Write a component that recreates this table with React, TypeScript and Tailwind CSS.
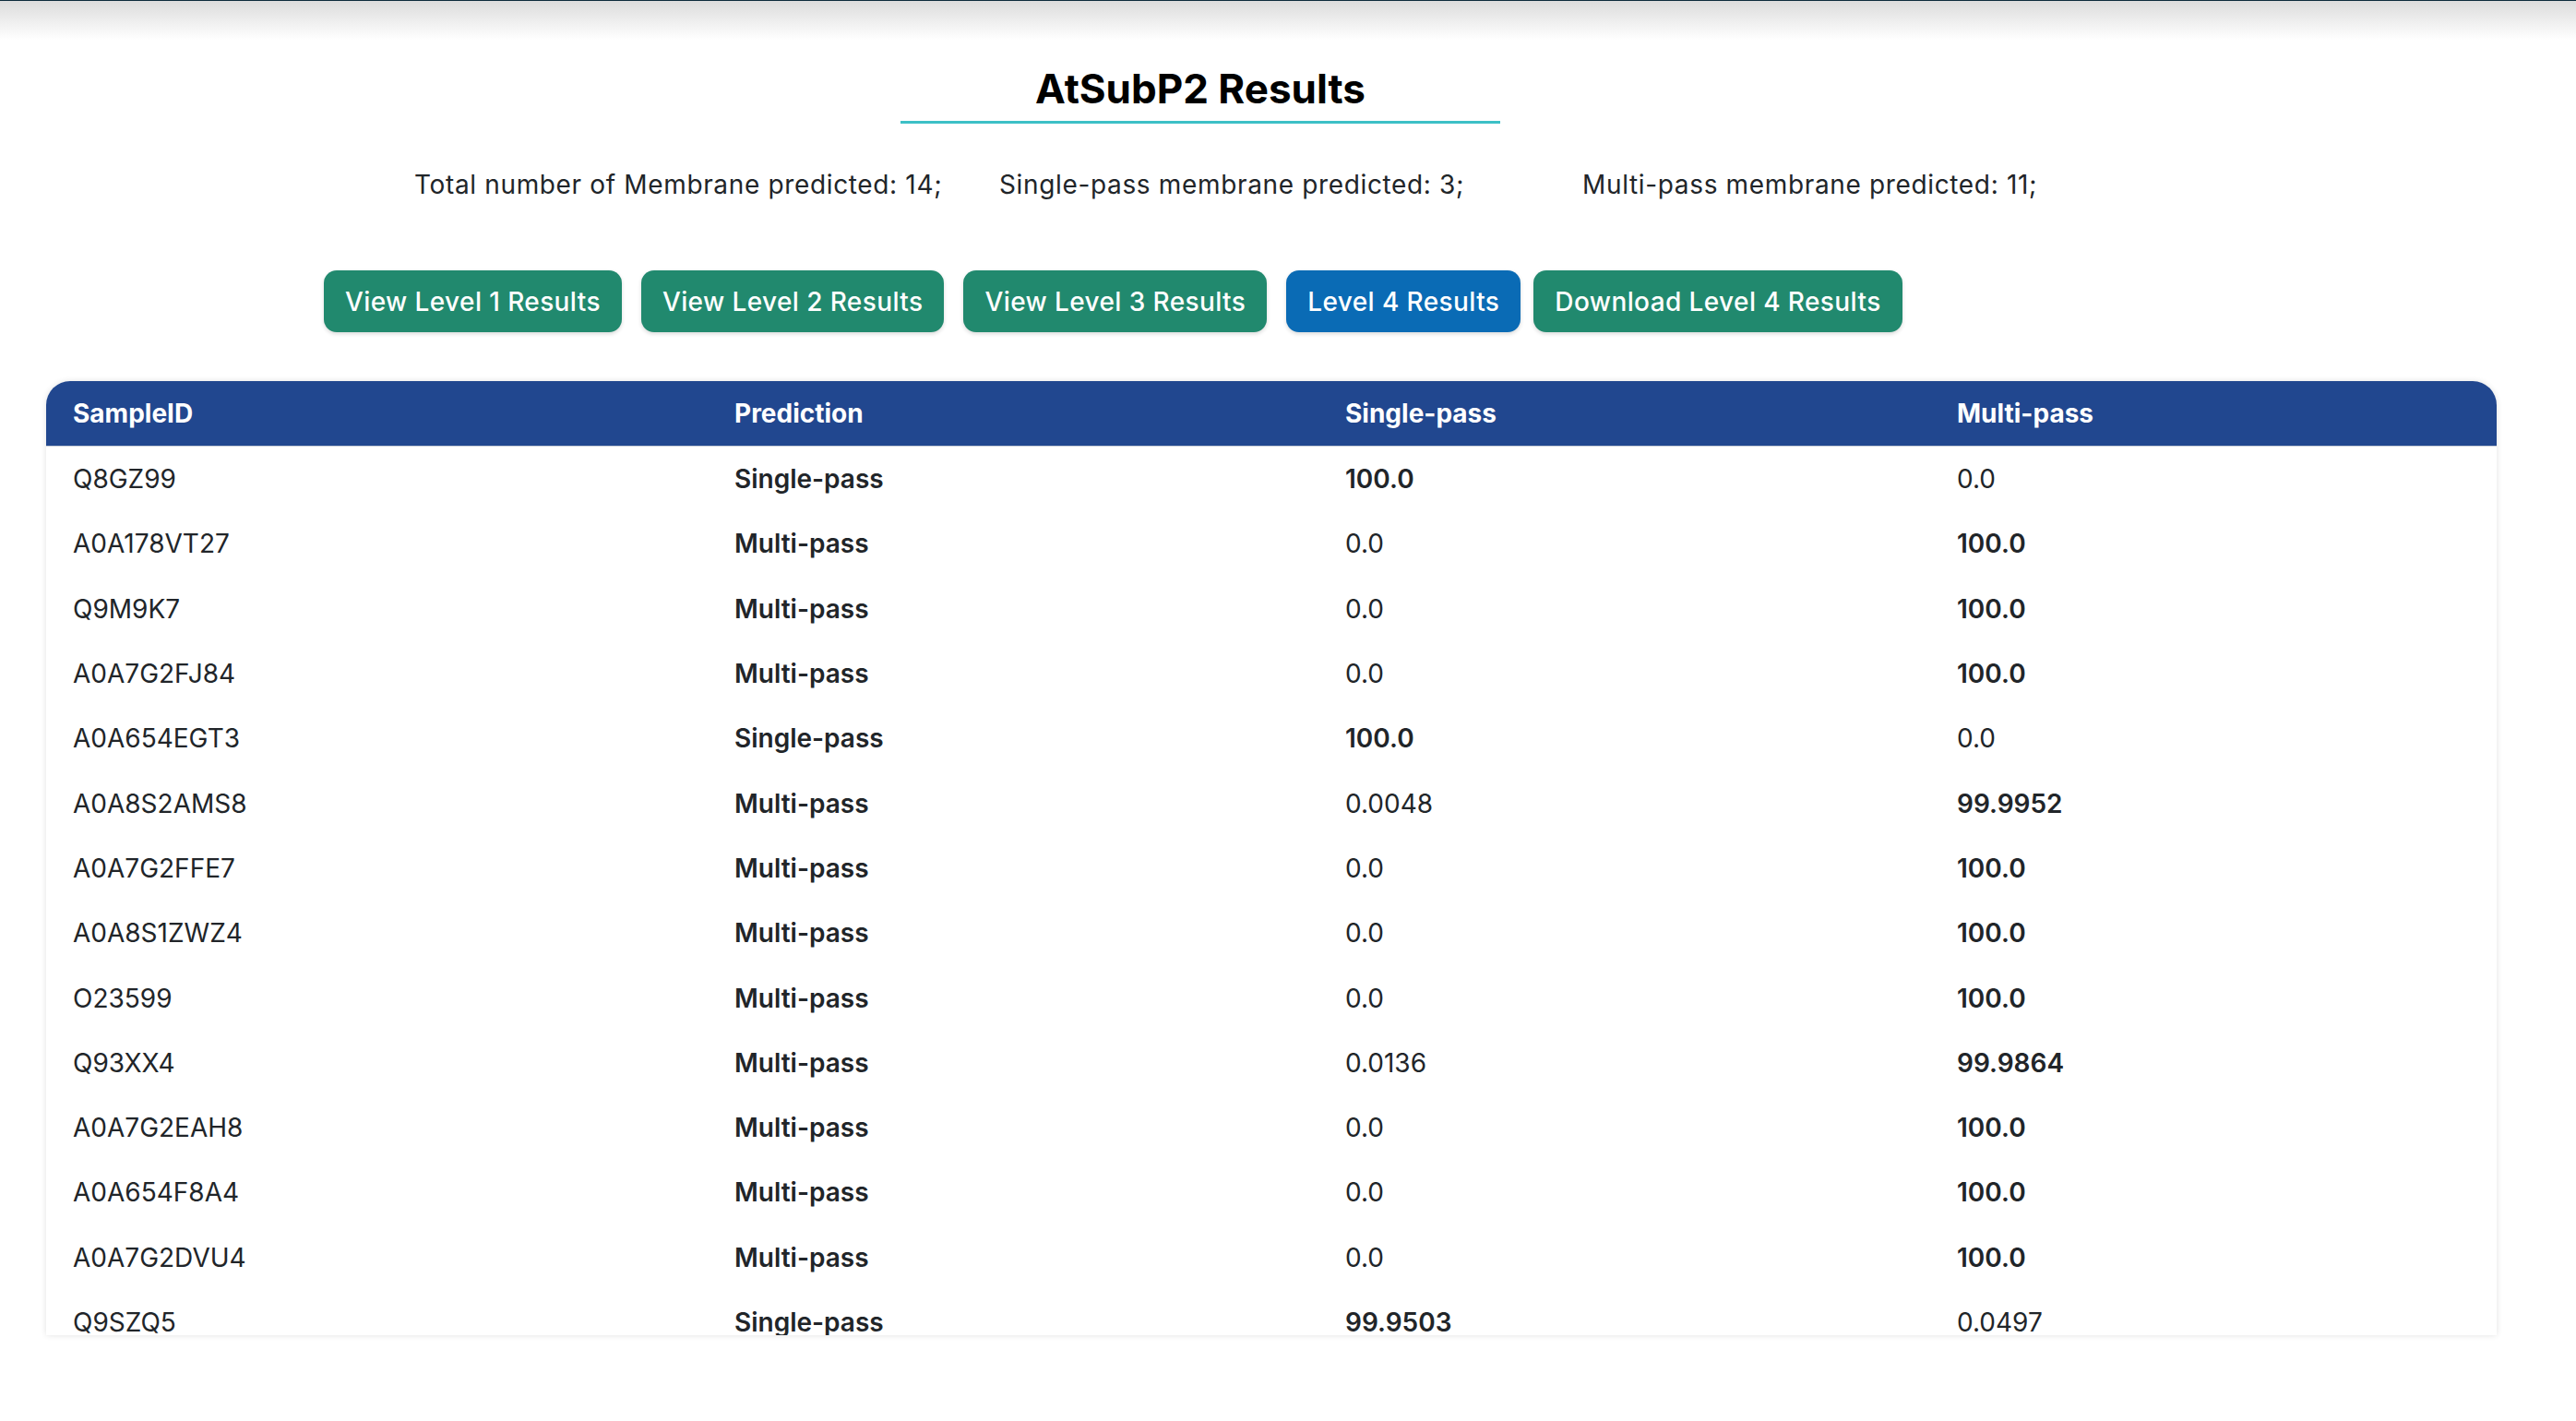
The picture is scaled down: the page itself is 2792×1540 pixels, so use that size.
import React from "react";

type Row = {
  id: string;
  prediction: "Single-pass" | "Multi-pass";
  single: string;
  multi: string;
};

const rows: Row[] = [
  { id: "Q8GZ99", prediction: "Single-pass", single: "100.0", multi: "0.0" },
  { id: "A0A178VT27", prediction: "Multi-pass", single: "0.0", multi: "100.0" },
  { id: "Q9M9K7", prediction: "Multi-pass", single: "0.0", multi: "100.0" },
  { id: "A0A7G2FJ84", prediction: "Multi-pass", single: "0.0", multi: "100.0" },
  { id: "A0A654EGT3", prediction: "Single-pass", single: "100.0", multi: "0.0" },
  { id: "A0A8S2AMS8", prediction: "Multi-pass", single: "0.0048", multi: "99.9952" },
  { id: "A0A7G2FFE7", prediction: "Multi-pass", single: "0.0", multi: "100.0" },
  { id: "A0A8S1ZWZ4", prediction: "Multi-pass", single: "0.0", multi: "100.0" },
  { id: "O23599", prediction: "Multi-pass", single: "0.0", multi: "100.0" },
  { id: "Q93XX4", prediction: "Multi-pass", single: "0.0136", multi: "99.9864" },
  { id: "A0A7G2EAH8", prediction: "Multi-pass", single: "0.0", multi: "100.0" },
  { id: "A0A654F8A4", prediction: "Multi-pass", single: "0.0", multi: "100.0" },
  { id: "A0A7G2DVU4", prediction: "Multi-pass", single: "0.0", multi: "100.0" },
  { id: "Q9SZQ5", prediction: "Single-pass", single: "99.9503", multi: "0.0497" },
];

const levelButtons = ["View Level 1 Results", "View Level 2 Results", "View Level 3 Results"];

export default function App() {
  return (
    <div
      className="min-h-screen bg-white text-[#212529]"
      style={{ fontFamily: "Inter, 'Noto Sans', 'Liberation Sans', sans-serif" }}
    >
      {/* shadow left by the navbar above */}
      <div className="h-px bg-[#0d2b3c]" />
      <div className="h-[42px] bg-gradient-to-b from-[#dcdcdc] to-white" />

      <div className="mt-[27px] ml-[976px] w-[650px] border-b-[3px] border-[#3cc0c6] pb-[8px] text-center">
        <h1 className="text-[44px] font-bold leading-[53px] text-black">AtSubP2 Results</h1>
      </div>

      <div className="mt-[49px] flex text-[28px] leading-[34px] tracking-[0.65px]">
        <span className="ml-[449px] w-[634px]">Total number of Membrane predicted: 14;</span>
        <span className="w-[632px]">Single-pass membrane predicted: 3;</span>
        <span>Multi-pass membrane predicted: 11;</span>
      </div>

      <div className="mt-[76px] ml-[351px] flex items-center">
        {levelButtons.map((label) => (
          <button
            key={label}
            className="mr-[21px] h-[67px] rounded-[14px] bg-[#21896e] px-[23px] text-[28px] font-medium tracking-[0.4px] text-white shadow-[0_2px_4px_rgba(0,0,0,0.15)]"
          >
            {label}
          </button>
        ))}
        <button className="mr-[14px] h-[67px] rounded-[14px] bg-[#0a6bb5] px-[23px] text-[28px] font-medium tracking-[0.4px] text-white shadow-[0_2px_4px_rgba(0,0,0,0.15)]">
          Level 4 Results
        </button>
        <button className="h-[67px] rounded-[14px] bg-[#21896e] px-[23px] text-[28px] font-medium tracking-[0.4px] text-white shadow-[0_2px_4px_rgba(0,0,0,0.15)]">
          Download Level 4 Results
        </button>
      </div>

      <div className="mt-[53px] ml-[50px] w-[2656px] h-[1034px] overflow-hidden rounded-t-[26px] bg-white shadow-[0_0_6px_rgba(0,0,0,0.12)]">
        <div className="grid h-[71px] grid-cols-[717px_662px_663px_1fr] items-center border-b border-[#c9cfd8] bg-[#21478f] text-[28px] font-bold text-white">
          <div className="pl-[29px]">SampleID</div>
          <div className="pl-[29px]">Prediction</div>
          <div className="pl-[29px]">Single-pass</div>
          <div className="pl-[29px]">Multi-pass</div>
        </div>
        {rows.map((r) => {
          const singleWins = r.prediction === "Single-pass";
          return (
            <div
              key={r.id}
              className="grid h-[70.3px] grid-cols-[717px_662px_663px_1fr] items-center text-[28px]"
            >
              <div className="pl-[29px]">{r.id}</div>
              <div className="pl-[29px] font-semibold">{r.prediction}</div>
              <div className={singleWins ? "pl-[29px] font-semibold" : "pl-[29px]"}>{r.single}</div>
              <div className={singleWins ? "pl-[29px]" : "pl-[29px] font-semibold"}>{r.multi}</div>
            </div>
          );
        })}
      </div>
    </div>
  );
}
